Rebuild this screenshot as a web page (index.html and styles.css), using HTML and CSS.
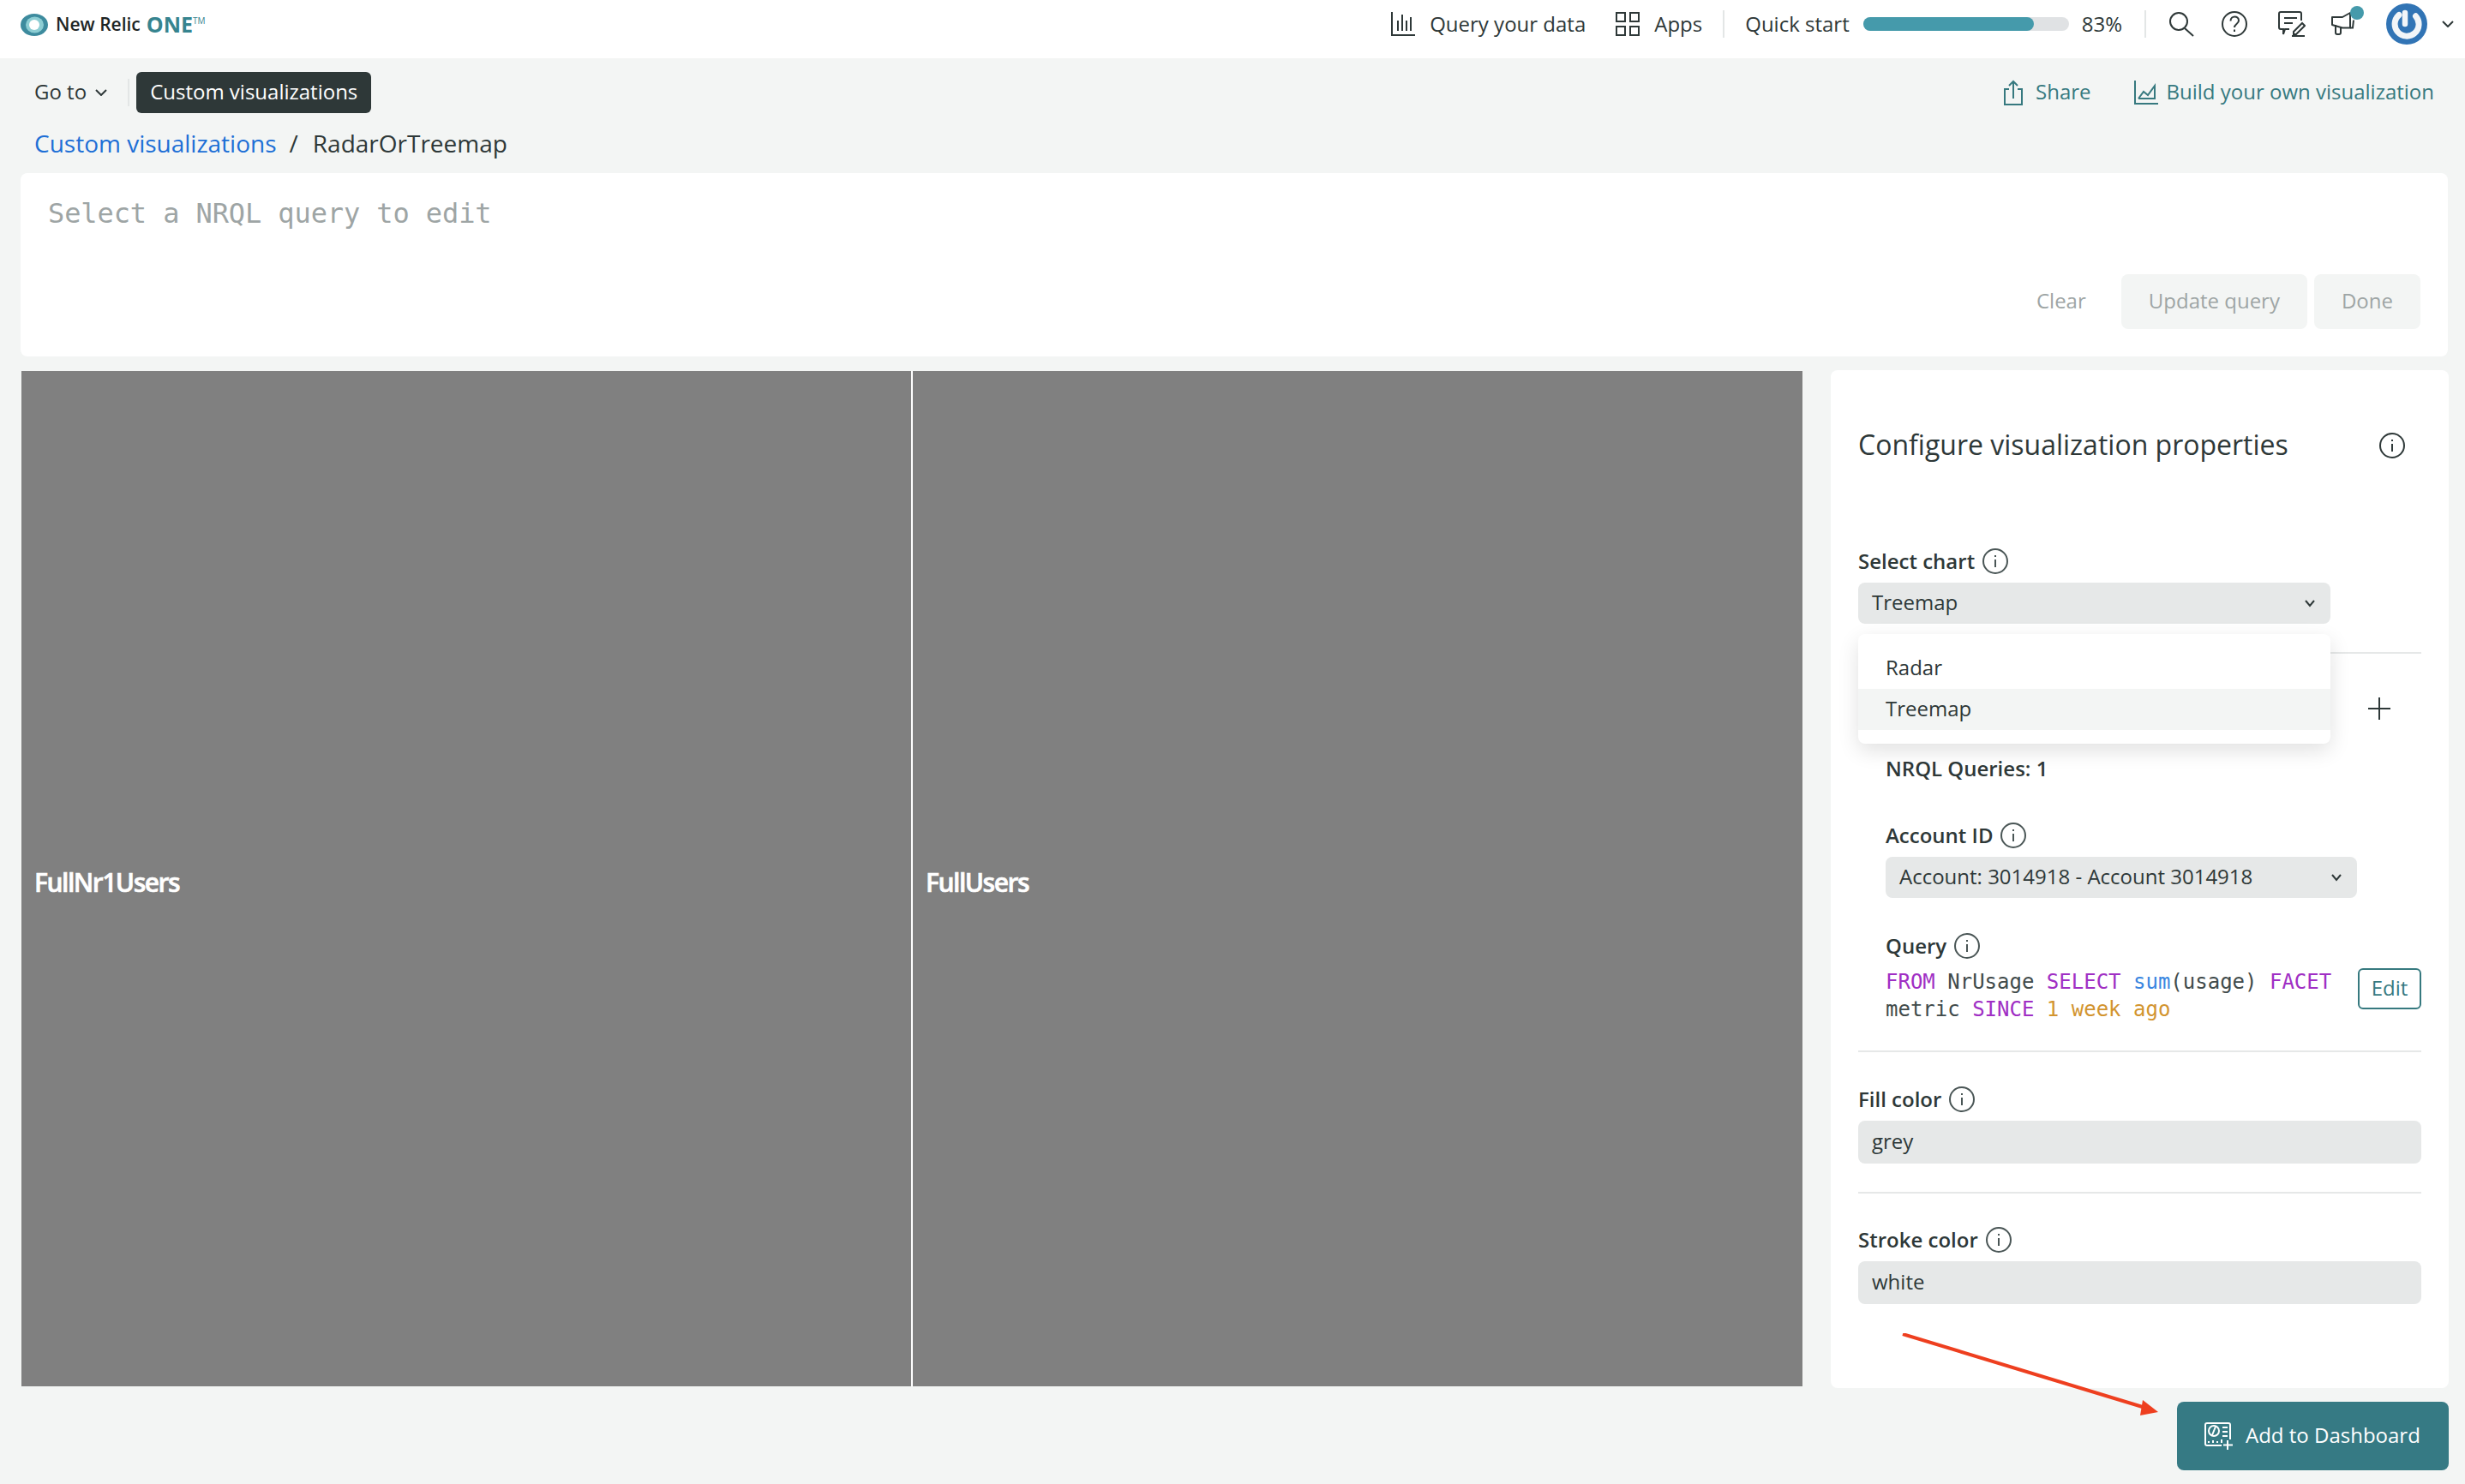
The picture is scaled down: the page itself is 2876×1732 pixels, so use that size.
FILE: index.html
```html
<!DOCTYPE html>
<html lang="en">
<head>
    <meta charset="UTF-8">
    <title>RadarOrTreemap - New Relic ONE</title>
    <link rel="stylesheet" href="styles.css">
</head>
<body>
    <!-- Top bar -->
    <header class="topbar">
        <div class="logo">
            <svg class="logo-mark" width="32" height="26" viewBox="0 0 32 26">
                <ellipse cx="16" cy="13" rx="16" ry="13" fill="#3d8b9e"/>
                <ellipse cx="16.500" cy="13" rx="10.500" ry="9.500" fill="#8ccdd3"/>
                <ellipse cx="16" cy="13" rx="6" ry="6" fill="#fff"/>
            </svg>
            <span class="logo-name">New Relic</span>
            <span class="logo-one">ONE<sup>TM</sup></span>
        </div>
        <nav class="topnav">
            <a class="topnav-item">
                <svg width="28" height="28" viewBox="0 0 28 28" fill="none" stroke="#2e3838" stroke-width="2"><path d="M1 0v27h27M8 10v12M13 3v19M18 10v12M23 6v16"/></svg>
                <span>Query your data</span>
            </a>
            <a class="topnav-item apps-item">
                <svg width="28" height="28" viewBox="0 0 28 28" fill="none" stroke="#2e3838" stroke-width="2"><rect x="1" y="1" width="10" height="10"/><rect x="17" y="1" width="10" height="10"/><rect x="1" y="17" width="10" height="10"/><rect x="17" y="17" width="10" height="10"/></svg>
                <span>Apps</span>
            </a>
            <span class="topnav-sep sep-first"></span>
            <span class="quick-start">Quick start</span>
            <div class="progress"><div class="progress-fill" style="width: 83%"></div></div>
            <span class="progress-value">83%</span>
            <span class="topnav-sep sep-second"></span>
            <svg class="icon-search" width="30" height="30" viewBox="0 0 30 30" fill="none" stroke="#2e3838" stroke-width="2"><circle cx="12" cy="12" r="10"/><path d="M19 20l10 9"/></svg>
            <svg class="icon-help" width="30" height="30" viewBox="0 0 30 30" fill="none" stroke="#2e3838" stroke-width="2"><circle cx="15" cy="15" r="14"/><path d="M10.500 11.500c0-7 9.500-6.500 9.500-.5 0 4-5 4-5 8"/><path d="M15 21.500v2.500"/></svg>
            <svg class="icon-feedback" width="32" height="30" viewBox="0 0 32 30" fill="none" stroke="#2e3838" stroke-width="2"><path d="M13 21h-5l-2 6v-6H3a2 2 0 0 1-2-2V3a2 2 0 0 1 2-2h22a2 2 0 0 1 2 2v8"/><path d="M7 8h15M7 14h10"/><path d="M18 24l10-10 3 3-10 10h-3z"/><path d="M16 29h15"/></svg>
            <div class="icon-announce">
                <svg width="30" height="30" viewBox="0 0 30 30" fill="none" stroke="#2e3838" stroke-width="2"><path d="M1 7h12l9-5v17.500H13L1 16z" stroke-linejoin="round"/><path d="M5 16v9a2 2 0 0 0 2 2h2a2 2 0 0 0 2-2v-6"/><path d="M22 19.500h3l1-9"/></svg>
                <span class="announce-dot"></span>
            </div>
            <svg class="avatar" width="48" height="48" viewBox="0 0 48 48">
                <circle cx="24" cy="24" r="24" fill="#3174b5"/>
                <path d="M15 13.500A14 14 0 1 0 34.500 14.800" fill="none" stroke="#f2f5f8" stroke-width="7" stroke-linecap="round"/>
                <path d="M22 11v13" stroke="#f2f5f8" stroke-width="6.500" stroke-linecap="round"/>
            </svg>
            <svg class="chevron-top" width="14" height="8" viewBox="0 0 14 8" fill="none" stroke="#2e3838" stroke-width="2"><path d="M1 1l6 6 6-6"/></svg>
        </nav>
    </header>

    <!-- Sub navigation -->
    <div class="subnav">
        <div class="subnav-left">
            <span class="goto">Go to</span>
            <svg class="chevron-goto" width="14" height="8" viewBox="0 0 14 8" fill="none" stroke="#2e3838" stroke-width="2"><path d="M1 1l6 6 6-6"/></svg>
            <span class="subnav-sep"></span>
            <span class="pill">Custom visualizations</span>
        </div>
        <div class="subnav-right">
            <a class="action-link share-link">
                <svg width="22" height="30" viewBox="0 0 22 30" fill="none" stroke="#36797f" stroke-width="2"><path d="M6 11H1v18h20V11h-5M11 22V2M6 7l5-5 5 5"/></svg>
                <span>Share</span>
            </a>
            <a class="action-link">
                <svg width="28" height="30" viewBox="0 0 28 30" fill="none" stroke="#36797f" stroke-width="2"><path d="M1 1v27h27M5 22l6-8 5 4 8-11v15H5"/></svg>
                <span>Build your own visualization</span>
            </a>
        </div>
    </div>

    <div class="breadcrumb">
        <a class="crumb-link">Custom visualizations</a>
        <span class="crumb-sep">/</span>
        <span>RadarOrTreemap</span>
    </div>

    <!-- NRQL editor -->
    <section class="query-card">
        <div class="query-placeholder">Select a NRQL query to edit</div>
        <div class="query-actions">
            <span class="btn-clear">Clear</span>
            <span class="btn-muted btn-update">Update query</span>
            <span class="btn-muted">Done</span>
        </div>
    </section>

    <div class="workspace">
        <!-- Chart -->
        <div class="treemap">
            <div class="treemap-cell cell-first">FullNr1Users</div>
            <div class="treemap-cell cell-second">FullUsers</div>
        </div>

        <!-- Configure panel -->
        <aside class="panel">
            <div class="panel-head">
                <h2>Configure visualization properties</h2>
                <svg class="info info-dark" width="30" height="30" viewBox="0 0 30 30"><circle cx="15" cy="15" r="14"/><path d="M15 13v9M15 8v2"/></svg>
            </div>

            <div class="label first-label">Select chart
                <svg class="info" width="30" height="30" viewBox="0 0 30 30"><circle cx="15" cy="15" r="14"/><path d="M15 13v9M15 8v2"/></svg>
            </div>
            <div class="select select-chart">
                <span>Treemap</span>
                <svg width="12" height="9" viewBox="0 0 12 9" fill="none" stroke="#2e3838" stroke-width="2"><path d="M1 1l5 6 5-6"/></svg>
            </div>

            <!-- Open dropdown -->
            <div class="dropdown">
                <div class="dropdown-item">Radar</div>
                <div class="dropdown-item dropdown-active">Treemap</div>
            </div>

            <div class="divider divider-chart"></div>

            <div class="plus-row">
                <svg width="26" height="26" viewBox="0 0 26 26" stroke="#2e3838" stroke-width="2"><path d="M13 0v26M0 13h26"/></svg>
            </div>

            <div class="query-group">
                <div class="nrql-count">NRQL Queries: 1</div>
                <div class="label account-label">Account ID
                    <svg class="info" width="30" height="30" viewBox="0 0 30 30"><circle cx="15" cy="15" r="14"/><path d="M15 13v9M15 8v2"/></svg>
                </div>
                <div class="select select-account">
                    <span>Account: 3014918 - Account 3014918</span>
                    <svg width="12" height="9" viewBox="0 0 12 9" fill="none" stroke="#2e3838" stroke-width="2"><path d="M1 1l5 6 5-6"/></svg>
                </div>
                <div class="label query-label">Query
                    <svg class="info" width="30" height="30" viewBox="0 0 30 30"><circle cx="15" cy="15" r="14"/><path d="M15 13v9M15 8v2"/></svg>
                </div>
                <div class="query-row">
                    <code class="nrql"><span class="kw">FROM</span> NrUsage <span class="kw">SELECT</span> <span class="fn">sum</span>(usage) <span class="kw">FACET</span> metric <span class="kw">SINCE</span> <span class="num">1 week ago</span></code>
                    <span class="btn-edit">Edit</span>
                </div>
            </div>

            <div class="divider divider-code"></div>

            <div class="label fill-label">Fill color
                <svg class="info" width="30" height="30" viewBox="0 0 30 30"><circle cx="15" cy="15" r="14"/><path d="M15 13v9M15 8v2"/></svg>
            </div>
            <div class="text-input">grey</div>

            <div class="divider divider-fill"></div>

            <div class="label stroke-label">Stroke color
                <svg class="info" width="30" height="30" viewBox="0 0 30 30"><circle cx="15" cy="15" r="14"/><path d="M15 13v9M15 8v2"/></svg>
            </div>
            <div class="text-input">white</div>
        </aside>
    </div>

    <div class="footer">
        <a class="btn-primary">
            <svg width="34" height="32" viewBox="0 0 34 32" fill="none" stroke="#fff" stroke-width="2"><path d="M20 27H3a2 2 0 0 1-2-2V3a2 2 0 0 1 2-2h25a2 2 0 0 1 2 2v17"/><circle cx="11" cy="10" r="6"/><path d="M13 5l-4 10M21 6h6M21 11h6M21 16h6M5 22v2M10 21v3M15 22v2M20 20v4M27 21v11M22 26.500h11"/></svg>
            <span>Add to Dashboard</span>
        </a>
    </div>

    <!-- Annotation arrow -->
    <svg class="annotation" width="320" height="110" viewBox="0 0 320 110">
        <line x1="1" y1="1" x2="284" y2="87" stroke="#ee3f1f" stroke-width="4"/>
        <path d="M299 92L281 78L278 96Z" fill="#ee3f1f"/>
    </svg>
</body>
</html>
```

FILE: styles.css
```css
* {
    box-sizing: border-box;
}
body {
    margin: 0;
    position: relative;
    height: 1732px;
    overflow: hidden;
    background-color: #f3f5f4;
    color: #2e3838;
    font-family: "Open Sans", "Noto Sans", sans-serif;
    font-size: 24px;
}
svg {
    display: block;
    flex: none;
}

/* Top bar */
.topbar {
    height: 68px;
    background-color: #ffffff;
    display: flex;
    align-items: center;
    justify-content: space-between;
    padding: 0 13px 12px 24px;
}
.logo {
    display: flex;
    align-items: center;
}
.logo-mark {
    margin-top: 2px;
}
.logo-name {
    margin-left: 9px;
    font-size: 21px;
    font-weight: 600;
    color: #1d2525;
}
.logo-one {
    margin-left: 7px;
    font-size: 25px;
    font-weight: 700;
    color: #36848f;
}
.logo-one sup {
    font-size: 10px;
    font-weight: 400;
    vertical-align: 10px;
    line-height: 0;
}
.topnav {
    display: flex;
    align-items: center;
}
.topnav-item {
    display: flex;
    align-items: center;
    gap: 17px;
}
.topnav-item span,
.quick-start,
.progress-value {
    padding-bottom: 2px;
}
.apps-item {
    margin-left: 35px;
}
.topnav-sep {
    width: 2px;
    height: 32px;
    background-color: #e3e6e6;
}
.sep-first {
    margin: 0 24px;
}
.sep-second {
    margin: 0 26px;
}
.progress {
    width: 240px;
    height: 16px;
    margin: 0 15px 0 16px;
    border-radius: 8px;
    background-color: #e0e2e4;
}
.progress-fill {
    height: 100%;
    border-radius: 8px;
    background-color: #459aab;
}
.icon-help {
    margin-left: 32px;
}
.icon-feedback {
    margin-left: 36px;
}
.icon-announce {
    position: relative;
    margin-left: 30px;
}
.announce-dot {
    position: absolute;
    top: -6px;
    right: -8px;
    width: 16px;
    height: 16px;
    border-radius: 50%;
    background-color: #459aab;
}
.avatar {
    margin-left: 34px;
}
.chevron-top {
    margin-left: 17px;
}

/* Sub navigation */
.subnav {
    display: flex;
    align-items: center;
    justify-content: space-between;
    padding: 16px 36px 0 40px;
}
.subnav-left {
    display: flex;
    align-items: center;
}
.goto {
    padding-bottom: 3px;
}
.chevron-goto {
    margin-left: 10px;
}
.subnav-sep {
    width: 2px;
    height: 32px;
    margin: 0 8px 0 24px;
    background-color: #e3e6e6;
}
.pill {
    height: 48px;
    padding: 0 16px 3px;
    display: flex;
    align-items: center;
    border-radius: 6px;
    background-color: #2e3838;
    color: #ffffff;
}
.subnav-right {
    display: flex;
    align-items: center;
    color: #36797f;
}
.action-link {
    display: flex;
    align-items: center;
    gap: 10px;
}
.action-link span {
    padding-bottom: 3px;
}
.share-link {
    gap: 15px;
    margin-right: 50px;
}

.breadcrumb {
    height: 70px;
    padding-left: 40px;
    display: flex;
    align-items: center;
    font-size: 28px;
}
.crumb-link {
    color: #1d6fd6;
}
.crumb-sep {
    margin: 0 17px 0 15px;
}

/* NRQL editor */
.query-card {
    height: 214px;
    margin: 0 20px 0 24px;
    padding: 27px 32px 32px;
    border-radius: 8px;
    background-color: #ffffff;
    display: flex;
    flex-direction: column;
    justify-content: space-between;
}
.query-placeholder {
    font-family: "DejaVu Sans Mono", monospace;
    font-size: 32px;
    line-height: 40px;
    letter-spacing: -0.1px;
    color: #9ea5a5;
}
.query-actions {
    display: flex;
    align-items: center;
    justify-content: flex-end;
    color: #9ea5a5;
}
.btn-clear {
    margin-right: 41px;
    padding-bottom: 3px;
}
.btn-muted {
    height: 64px;
    padding: 0 32px 3px;
    display: flex;
    align-items: center;
    border-radius: 8px;
    background-color: #f3f5f4;
}
.btn-update {
    margin-right: 8px;
}

.workspace {
    display: flex;
    height: 1188px;
    margin-top: 16px;
    padding-left: 25px;
}

/* Chart */
.treemap {
    width: 2078px;
    margin: 1px 33px 2px 0;
    display: flex;
    background-color: #ffffff;
    gap: 2px;
}
.treemap-cell {
    padding: 7px 0 0 15px;
    display: flex;
    align-items: center;
    background-color: #808080;
    color: #ffffff;
    font-size: 30px;
    font-weight: 600;
    letter-spacing: -1.5px;
    -webkit-text-stroke: 0.6px #ffffff;
}
.cell-first {
    width: 1038px;
}
.cell-second {
    flex: 1;
}

/* Configure panel */
.panel {
    position: relative;
    width: 721px;
    padding: 66px 32px 0;
    border-radius: 8px;
    background-color: #ffffff;
}
.panel-head {
    height: 44px;
    padding-right: 19px;
    display: flex;
    align-items: center;
    justify-content: space-between;
}
.panel-head h2 {
    margin: 0 0 3px;
    font-size: 32px;
    font-weight: 400;
}
.label {
    height: 30px;
    padding-bottom: 2px;
    display: flex;
    align-items: center;
    gap: 9px;
    font-weight: 600;
}
.label svg {
    margin-top: 2px;
}
.first-label {
    margin-top: 98px;
}
.info {
    fill: none;
    stroke: #4a5656;
    stroke-width: 2;
}
.info-dark {
    stroke: #2e3838;
}
.select {
    height: 48px;
    margin-top: 10px;
    padding: 0 18px 4px 16px;
    display: flex;
    align-items: center;
    justify-content: space-between;
    border-radius: 8px;
    background-color: #e6e8e8;
}
.select svg {
    margin-top: 4px;
}
.select-chart {
    width: 551px;
}
.select-account {
    width: 550px;
}
.dropdown {
    position: absolute;
    top: 308px;
    left: 32px;
    z-index: 2;
    width: 551px;
    height: 128px;
    padding-top: 16px;
    border-radius: 8px;
    background-color: #ffffff;
    box-shadow: 0 8px 24px rgba(0, 0, 0, 0.12);
}
.dropdown-item {
    height: 48px;
    padding: 0 0 4px 32px;
    display: flex;
    align-items: center;
}
.dropdown-active {
    background-color: #f3f5f4;
}
.divider {
    height: 2px;
    background-color: #e6e8e8;
}
.divider-chart {
    margin-top: 33px;
}
.divider-code {
    margin-top: 32px;
}
.divider-fill {
    margin-top: 33px;
}
.plus-row {
    margin-top: 51px;
    padding-right: 36px;
    display: flex;
    justify-content: flex-end;
}
.query-group {
    padding-left: 32px;
}
.nrql-count {
    margin-top: 41px;
    line-height: 32px;
    font-weight: 600;
}
.account-label {
    margin-top: 47px;
}
.query-label {
    margin-top: 41px;
}
.query-row {
    height: 64px;
    margin-top: 11px;
    display: flex;
    justify-content: space-between;
}
.nrql {
    width: 530px;
    font-family: "DejaVu Sans Mono", monospace;
    font-size: 24px;
    line-height: 32px;
    color: #414b4b;
}
.kw {
    color: #a02fc4;
}
.fn {
    color: #3a86e0;
}
.num {
    color: #d2942f;
}
.btn-edit {
    width: 74px;
    height: 48px;
    padding-bottom: 3px;
    display: flex;
    align-items: center;
    justify-content: center;
    border: 2px solid #36797f;
    border-radius: 6px;
    color: #36797f;
}
.fill-label {
    margin-top: 40px;
}
.stroke-label {
    margin-top: 39px;
}
.text-input {
    height: 50px;
    margin-top: 10px;
    padding: 0 16px 4px;
    display: flex;
    align-items: center;
    border-radius: 8px;
    background-color: #e6e8e8;
}

.footer {
    margin-top: 16px;
    padding-right: 19px;
    display: flex;
    justify-content: flex-end;
}
.btn-primary {
    width: 317px;
    height: 80px;
    padding-left: 32px;
    display: flex;
    align-items: center;
    gap: 14px;
    border-radius: 8px;
    background-color: #367a84;
    color: #ffffff;
}
.btn-primary span {
    padding-bottom: 4px;
}

/* Annotation arrow */
.annotation {
    position: absolute;
    top: 1556px;
    left: 2219px;
    z-index: 3;
}
```
